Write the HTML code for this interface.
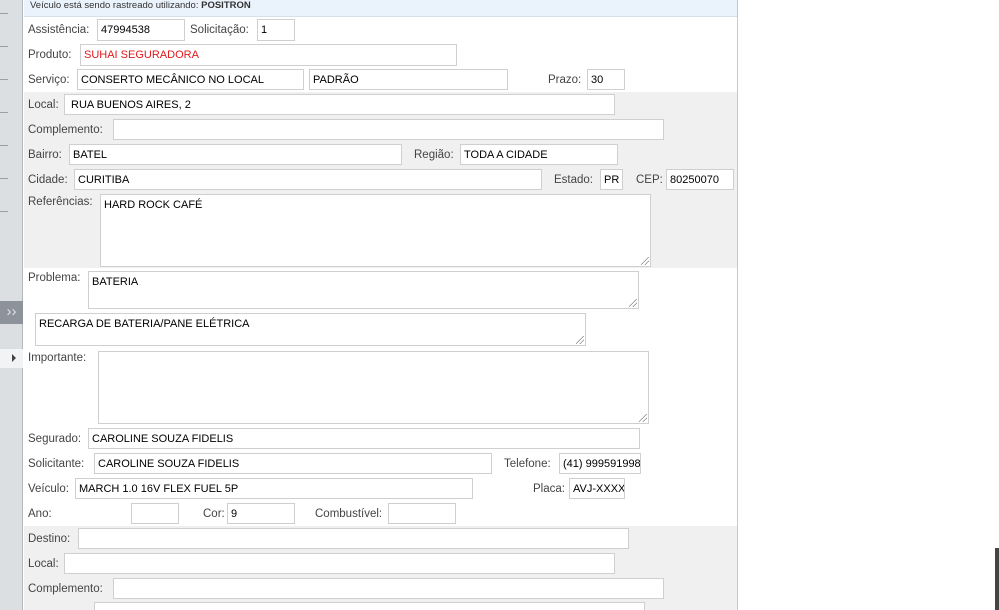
<!DOCTYPE html><html style="overflow:hidden;height:610px"><head><meta charset="utf-8"><style>
*{margin:0;padding:0;box-sizing:border-box}
body{width:999px;height:610px;overflow:hidden;background:#fff;position:relative;font-family:"Liberation Sans",sans-serif}
.a{position:absolute}
.sb{left:0;top:0;width:23px;height:610px;background:#dcdfe2;border-right:1px solid #b4b8bc}
.tk{position:absolute;left:0;width:8px;height:1px;background:#9aa0a6}
.main{left:24px;top:0;width:714px;height:610px;border-right:1px solid #c8c8c8}
.g{position:absolute;left:24px;width:713px;background:#f0f0f0}
.l{position:absolute;font-size:11.5px;color:#444;line-height:14px;white-space:nowrap}
.i{position:absolute;background:#fff;border:1px solid #cfcfcf;font-size:11px;color:#000;line-height:20px;padding-left:3px;white-space:nowrap;overflow:hidden}
.t{line-height:14px;padding-top:3px}
.rz{position:absolute;right:1px;bottom:1px;width:8px;height:8px;background:linear-gradient(135deg,transparent 45%,#888 45%,#888 52%,transparent 52%,transparent 70%,#888 70%,#888 77%,transparent 77%)}
</style></head><body>
<div class="a sb">
<div class="tk" style="top:13px"></div><div class="tk" style="top:46px"></div><div class="tk" style="top:79px"></div><div class="tk" style="top:112px"></div><div class="tk" style="top:145px"></div><div class="tk" style="top:178px"></div><div class="tk" style="top:211px"></div>
<div class="a" style="left:0;top:301px;width:23px;height:23px;background:#8d939a;color:#dfe3e7;font-size:15px;line-height:22px;text-align:center">&#8250;&#8250;</div>
<div class="a" style="left:0;top:349px;width:23px;height:19px;background:#f2f3f4"></div>
<div class="a" style="left:12px;top:354px;width:0;height:0;border-left:4px solid #444;border-top:4px solid transparent;border-bottom:4px solid transparent"></div>
</div>
<div class="a main"></div>
<div class="a" style="left:24px;top:0;width:713px;height:17px;background:#eaf3fc;border-bottom:1px solid #d5e0ea;font-size:9.5px;color:#333;padding-left:6px;padding-top:1px;line-height:10px">Veículo está sendo rastreado utilizando: <b>POSITRON</b></div>
<div class="g" style="top:92px;height:176px"></div>
<div class="g" style="top:526px;height:84px"></div>

<div class="l" style="left:28px;top:23px">Assistência:</div><div class="i" style="left:97px;top:19px;width:88px;height:22px">47994538</div>
<div class="l" style="left:190px;top:23px">Solicitação:</div><div class="i" style="left:257px;top:19px;width:38px;height:22px">1</div>
<div class="l" style="left:28px;top:48px">Produto:</div><div class="i" style="left:80px;top:44px;width:377px;height:22px;color:#e0191e">SUHAI SEGURADORA</div>
<div class="l" style="left:28px;top:73px">Serviço:</div><div class="i" style="left:77px;top:69px;width:227px;height:21px">CONSERTO MECÂNICO NO LOCAL</div>
<div class="i" style="left:309px;top:69px;width:199px;height:21px">PADRÃO</div>
<div class="l" style="left:548px;top:73px">Prazo:</div><div class="i" style="left:587px;top:69px;width:38px;height:21px">30</div>

<div class="l" style="left:28px;top:98px">Local:</div><div class="i" style="left:64px;top:94px;width:551px;height:21px;padding-left:6px">RUA BUENOS AIRES, 2</div>
<div class="l" style="left:28px;top:123px">Complemento:</div><div class="i" style="left:113px;top:119px;width:551px;height:21px"></div>
<div class="l" style="left:28px;top:148px">Bairro:</div><div class="i" style="left:69px;top:144px;width:333px;height:21px">BATEL</div>
<div class="l" style="left:414px;top:148px">Região:</div><div class="i" style="left:460px;top:144px;width:158px;height:21px">TODA A CIDADE</div>
<div class="l" style="left:28px;top:173px">Cidade:</div><div class="i" style="left:74px;top:169px;width:468px;height:21px">CURITIBA</div>
<div class="l" style="left:554px;top:173px">Estado:</div><div class="i" style="left:600px;top:169px;width:23px;height:21px">PR</div>
<div class="l" style="left:636px;top:173px">CEP:</div><div class="i" style="left:666px;top:169px;width:68px;height:21px">80250070</div>
<div class="l" style="left:28px;top:195px">Referências:</div><div class="i t" style="left:100px;top:194px;width:551px;height:73px">HARD ROCK CAFÉ<div class="rz"></div></div>

<div class="l" style="left:28px;top:271px">Problema:</div><div class="i t" style="left:88px;top:271px;width:551px;height:38px">BATERIA<div class="rz"></div></div>
<div class="i t" style="left:35px;top:313px;width:551px;height:33px">RECARGA DE BATERIA/PANE ELÉTRICA<div class="rz"></div></div>
<div class="l" style="left:28px;top:351px">Importante:</div><div class="i t" style="left:98px;top:351px;width:551px;height:73px"><div class="rz"></div></div>

<div class="l" style="left:28px;top:432px">Segurado:</div><div class="i" style="left:88px;top:428px;width:552px;height:21px">CAROLINE SOUZA FIDELIS</div>
<div class="l" style="left:28px;top:457px">Solicitante:</div><div class="i" style="left:94px;top:453px;width:398px;height:21px">CAROLINE SOUZA FIDELIS</div>
<div class="l" style="left:504px;top:457px">Telefone:</div><div class="i" style="left:559px;top:453px;width:82px;height:21px">(41) 999591998</div>
<div class="l" style="left:28px;top:482px">Veículo:</div><div class="i" style="left:75px;top:478px;width:398px;height:21px">MARCH 1.0 16V FLEX FUEL 5P</div>
<div class="l" style="left:533px;top:482px">Placa:</div><div class="i" style="left:569px;top:478px;width:56px;height:21px">AVJ-XXXX</div>
<div class="l" style="left:28px;top:507px">Ano:</div><div class="i" style="left:131px;top:503px;width:48px;height:21px"></div>
<div class="l" style="left:203px;top:507px">Cor:</div><div class="i" style="left:227px;top:503px;width:68px;height:21px">9</div>
<div class="l" style="left:315px;top:507px">Combustível:</div><div class="i" style="left:388px;top:503px;width:68px;height:21px"></div>

<div class="l" style="left:28px;top:532px">Destino:</div><div class="i" style="left:78px;top:528px;width:551px;height:21px"></div>
<div class="l" style="left:28px;top:557px">Local:</div><div class="i" style="left:64px;top:553px;width:551px;height:21px"></div>
<div class="l" style="left:28px;top:582px">Complemento:</div><div class="i" style="left:113px;top:578px;width:551px;height:21px"></div>
<div class="i" style="left:94px;top:602px;width:551px;height:8px;border-bottom:none"></div>

<div class="a" style="left:995px;top:548px;width:4px;height:62px;background:#444"></div>
</body></html>
